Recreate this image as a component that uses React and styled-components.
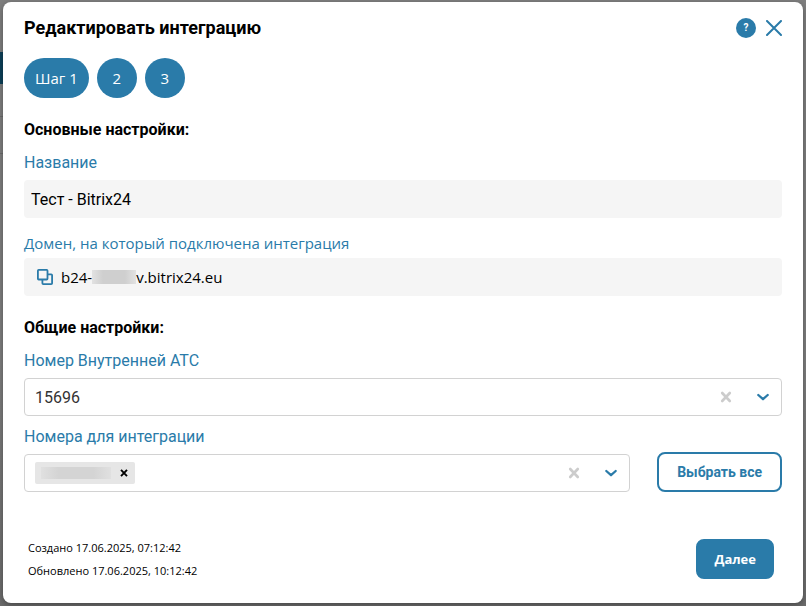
import React, { useState } from "react";
import styled, { createGlobalStyle, css } from "styled-components";

const blue = "#2a7ba9";
const ui = `Roboto, "Liberation Sans", sans-serif`;
const humanist = `"Open Sans", "Noto Sans", sans-serif`;

const GlobalStyle = createGlobalStyle`
  *, *::before, *::after { box-sizing: border-box; }
  body { margin: 0; background: #7f7f7f; font-family: ${ui}; font-size: 16px; color: #000; }
  button, input, select { font: inherit; color: inherit; }
  button { padding: 0; border: 0; background: none; cursor: pointer; }
  h1, h2, p { margin: 0; }
`;

const Backdrop = styled.div`
  position: relative;
  min-height: 100vh;
  padding: 2px 3px 3px;
  display: flex;
  background: linear-gradient(#7f7f7f 0 60%, #6c6c6c);
  overflow: hidden;
`;

const Underlay = styled.div`
  position: absolute;
  inset: 0;
  padding: 52px 50% 0 0;
`;

const UnderlayBar = styled.div`
  height: 32px;
  background: #0d4059;
`;

const UnderlayRow = styled.div`
  height: 38px;
  margin-top: 32px;
  border: solid #6c6c6c;
  border-width: 1px 0;
`;

const Dialog = styled.main`
  position: relative;
  flex: 1;
  min-width: 0;
  padding: 14px 21px 21px;
  display: flex;
  flex-direction: column;
  background: #fff;
  border-radius: 8px;
  box-shadow: 0 2px 6px rgba(0, 0, 0, 0.35);
`;

const Header = styled.header`
  display: flex;
  align-items: center;
  justify-content: space-between;
  height: 24px;
`;

const Title = styled.h1`
  font-size: 18px;
  line-height: 24px;
  font-weight: 700;
`;

const HeaderActions = styled.div`
  display: flex;
  align-items: center;
  gap: 10px;
`;

const HelpButton = styled.button`
  width: 20px;
  height: 20px;
  border-radius: 50%;
  background: ${blue};
  color: #fff;
  font-size: 10px;
  line-height: 20px;
  font-weight: 700;
`;

const IconButton = styled.button`
  display: grid;
  place-items: center;
  flex: none;
  width: 16px;
  height: 16px;
  color: ${(p) => p.$color || blue};
`;

const Steps = styled.nav`
  display: flex;
  gap: 8px;
  margin: 18px 0 20px;
`;

const StepButton = styled.button`
  min-width: 40px;
  height: 40px;
  padding: 0 11px;
  border-radius: 20px;
  background: ${blue};
  color: #fff;
  font-family: ${humanist};
  font-size: 15px;
  font-weight: 500;
`;

const SectionTitle = styled.h2`
  font-size: 16px;
  line-height: 24px;
  font-weight: 700;
`;

const Field = styled.div`
  flex: 1;
  min-width: 0;
  display: flex;
  flex-direction: column;
`;

const Label = styled.label`
  margin: ${(p) => (p.$humanist ? "13px 0 3px" : "9px 0 5px")};
  color: ${blue};
  font-family: ${(p) => (p.$humanist ? humanist : ui)};
  font-size: ${(p) => (p.$humanist ? 15 : 16)}px;
  line-height: 24px;
`;

const filled = css`
  width: 100%;
  height: 38px;
  border: 0;
  border-radius: 4px;
  background: #f5f5f5;
`;

const TextInput = styled.input`
  ${filled}
  padding: 0 7px;
`;

const DomainBox = styled.output`
  ${filled}
  display: flex;
  align-items: center;
  padding: 0 13px;
  margin-bottom: 20px;
  font-family: ${humanist};
  font-size: 15px;
`;

const DomainText = styled.span`
  display: flex;
  align-items: center;
  margin-left: 8px;
`;

const Redacted = styled.span`
  width: ${(p) => p.$width}px;
  height: ${(p) => p.$height}px;
  background: linear-gradient(90deg, ${(p) => p.$edge}, ${(p) => p.$core} 25% 75%, ${(p) => p.$edge});
`;

const SelectBox = styled.div`
  display: flex;
  align-items: center;
  height: 38px;
  padding: 0 10px;
  border: 1px solid #d2d2d2;
  border-radius: 4px;
  background: #fff;
`;

const Select = styled.select`
  flex: 1;
  min-width: 0;
  height: 36px;
  padding: 0;
  border: 0;
  outline: 0;
  appearance: none;
  background: none;
  color: #333;
`;

const ComboInput = styled.input`
  flex: 1;
  min-width: 0;
  height: 36px;
  border: 0;
  outline: 0;
  background: none;
`;

const SelectActions = styled.div`
  display: flex;
  align-items: center;
  gap: 21px;
`;

const Tag = styled.span`
  display: flex;
  align-items: center;
  gap: 5px;
  height: 22px;
  padding: 0 3px 0 6px;
  border-radius: 2px;
  background: #e6e6e6;
`;

const NumbersRow = styled.div`
  display: flex;
  align-items: flex-end;
  gap: 27px;
`;

const Button = styled.button`
  height: 40px;
  padding: 0 ${(p) => (p.$primary ? 16 : 18)}px;
  border: 2px solid ${blue};
  border-radius: 8px;
  background: ${(p) => (p.$primary ? blue : "#fff")};
  color: ${(p) => (p.$primary ? "#fff" : blue)};
  font-family: ${(p) => (p.$primary ? humanist : ui)};
  font-size: ${(p) => (p.$primary ? 13 : 14)}px;
  font-weight: 700;
  white-space: nowrap;
`;

const Footer = styled.footer`
  margin-top: auto;
  padding: 0 8px 0 4px;
  display: flex;
  align-items: center;
  justify-content: space-between;
`;

const Dates = styled.div`
  font-family: ${humanist};
  font-size: 11px;
  line-height: 23px;
`;

const CloseIcon = () => (
  <svg width="16" height="16" viewBox="0 0 16 16" fill="none" stroke="currentColor" strokeWidth="2" strokeLinecap="round" aria-hidden="true">
    <path d="M1 1l14 14M15 1L1 15" />
  </svg>
);

const ClearIcon = () => (
  <svg width="12" height="12" viewBox="0 0 12 12" fill="none" stroke="currentColor" strokeWidth="2.6" strokeLinecap="round" aria-hidden="true">
    <path d="M2.2 2l7.6 8M9.8 2L2.2 10" />
  </svg>
);

const RemoveIcon = () => (
  <svg width="8" height="8" viewBox="0 0 8 8" fill="none" stroke="currentColor" strokeWidth="1.9" aria-hidden="true">
    <path d="M1 .8l6 6.4M7 .8L1 7.2" />
  </svg>
);

const ChevronIcon = () => (
  <svg width="14" height="10" viewBox="0 0 14 10" fill="none" stroke="currentColor" strokeWidth="2.3" strokeLinecap="round" strokeLinejoin="round" aria-hidden="true">
    <path d="M2.3 3L7 7.2 11.7 3" />
  </svg>
);

const CopyIcon = () => (
  <svg width="16" height="16" viewBox="0 0 16 16" fill="none" stroke="currentColor" strokeWidth="1.8" strokeLinejoin="round" aria-hidden="true">
    <rect x=".9" y=".9" width="9.6" height="9.6" rx=".8" />
    <path d="M11 5.4h3.2q.9 0 .9.9v7.9q0 .9-.9.9H6.3q-.9 0-.9-.9V11" />
  </svg>
);

function Actions({ onClear }) {
  return (
    <SelectActions>
      <IconButton type="button" aria-label="Очистить" $color="#ccc" onClick={onClear}>
        <ClearIcon />
      </IconButton>
      <IconButton type="button" aria-label="Открыть список">
        <ChevronIcon />
      </IconButton>
    </SelectActions>
  );
}

export default function App() {
  const [name, setName] = useState("Тест - Bitrix24");
  const [pbx, setPbx] = useState("15696");
  const [tagged, setTagged] = useState(true);

  return (
    <>
      <GlobalStyle />
      <Backdrop>
        <Underlay aria-hidden="true">
          <UnderlayBar />
          <UnderlayRow />
        </Underlay>
        <Dialog>
          <Header>
            <Title>Редактировать интеграцию</Title>
            <HeaderActions>
              <HelpButton type="button">?</HelpButton>
              <IconButton type="button" aria-label="Закрыть">
                <CloseIcon />
              </IconButton>
            </HeaderActions>
          </Header>

          <Steps>
            <StepButton type="button" aria-current="step">Шаг 1</StepButton>
            <StepButton type="button">2</StepButton>
            <StepButton type="button">3</StepButton>
          </Steps>

          <SectionTitle>Основные настройки:</SectionTitle>
          <Label htmlFor="name">Название</Label>
          <TextInput id="name" value={name} onChange={(e) => setName(e.target.value)} />
          <Label htmlFor="domain" $humanist>Домен, на который подключена интеграция</Label>
          <DomainBox id="domain">
            <IconButton type="button" aria-label="Копировать">
              <CopyIcon />
            </IconButton>
            <DomainText>
              b24-
              <Redacted $width={44} $height={14} $edge="#e2e2e2" $core="#cfcfcf" />
              v.bitrix24.eu
            </DomainText>
          </DomainBox>

          <SectionTitle>Общие настройки:</SectionTitle>
          <Label htmlFor="pbx">Номер Внутренней АТС</Label>
          <SelectBox>
            <Select id="pbx" value={pbx} onChange={(e) => setPbx(e.target.value)}>
              <option value="" />
              <option value="15696">15696</option>
            </Select>
            <Actions onClear={() => setPbx("")} />
          </SelectBox>

          <NumbersRow>
            <Field>
              <Label htmlFor="numbers">Номера для интеграции</Label>
              <SelectBox>
                {tagged && (
                  <Tag>
                    <Redacted $width={70} $height={12} $edge="#e0e0e0" $core="#d4d4d4" />
                    <IconButton type="button" aria-label="Удалить" $color="#000" onClick={() => setTagged(false)}>
                      <RemoveIcon />
                    </IconButton>
                  </Tag>
                )}
                <ComboInput id="numbers" role="combobox" aria-expanded="false" />
                <Actions onClear={() => setTagged(false)} />
              </SelectBox>
            </Field>
            <Button type="button">Выбрать все</Button>
          </NumbersRow>

          <Footer>
            <Dates>
              <p>Создано 17.06.2025, 07:12:42</p>
              <p>Обновлено 17.06.2025, 10:12:42</p>
            </Dates>
            <Button type="button" $primary>Далее</Button>
          </Footer>
        </Dialog>
      </Backdrop>
    </>
  );
}
